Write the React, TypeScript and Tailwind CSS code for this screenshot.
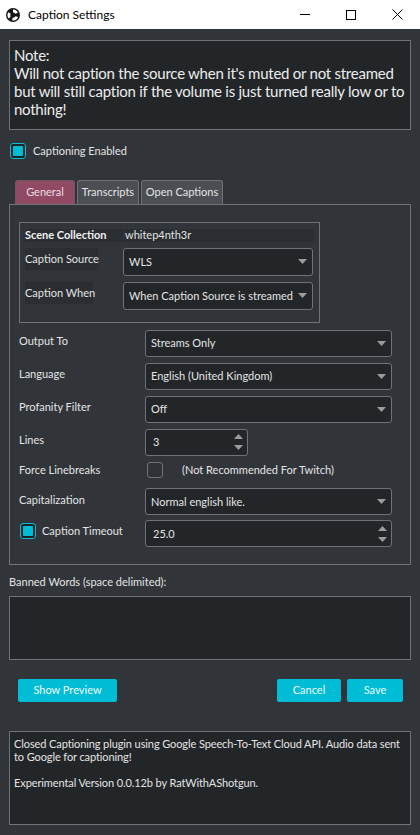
import React from 'react';

const font = { fontFamily: 'Lato, "Noto Sans", sans-serif' };

const Arrow = () => (
  <svg width="9" height="5" viewBox="0 0 9 5" className="shrink-0">
    <path d="M0 0 L9 0 L4.5 5 Z" fill="#9a9ca0" />
  </svg>
);

const Combo: React.FC<{ value: string; className?: string }> = ({ value, className = '' }) => (
  <div className={`flex items-center justify-between bg-[#232629] border border-[#6f7276] rounded-[3px] pl-[5px] pr-[5px] text-[11px] text-[#e4e4e4] whitespace-nowrap ${className}`}>
    <span className="pt-[1px]">{value}</span>
    <Arrow />
  </div>
);

const Spin: React.FC<{ value: string; className?: string }> = ({ value, className = '' }) => (
  <div className={`flex items-center justify-between bg-[#232629] border border-[#6f7276] rounded-[3px] pl-[7px] pr-[4px] text-[11px] text-[#e4e4e4] ${className}`}>
    <span className="pt-[1px]">{value}</span>
    <div className="flex flex-col gap-[6px]">
      <svg width="9" height="5" viewBox="0 0 9 5"><path d="M0 5 L9 5 L4.5 0 Z" fill="#9a9ca0" /></svg>
      <svg width="9" height="5" viewBox="0 0 9 5"><path d="M0 0 L9 0 L4.5 5 Z" fill="#9a9ca0" /></svg>
    </div>
  </div>
);

const Check: React.FC<{ on?: boolean }> = ({ on }) =>
  on ? (
    <div className="w-[16px] h-[16px] rounded-[3px] border border-[#00bcd4] bg-[#1f2326] flex items-center justify-center shrink-0">
      <div className="w-[10px] h-[10px] rounded-[1px] bg-[#00bcd4]" />
    </div>
  ) : (
    <div className="w-[16px] h-[16px] rounded-[3px] border border-[#6f7276] bg-[#2f3337] shrink-0" />
  );

const Row: React.FC<{ label: React.ReactNode; children: React.ReactNode; className?: string }> = ({ label, children, className = '' }) => (
  <div className={`flex items-center ${className}`}>
    <div className="w-[126px] shrink-0 text-[11px] text-[#e4e4e4] whitespace-nowrap -mt-[3px]">{label}</div>
    {children}
  </div>
);

export default function App() {
  return (
    <div className="w-[420px] h-[835px] bg-[#31353a] flex flex-col overflow-hidden" style={font}>
      {/* title bar */}
      <div className="h-[29px] bg-white flex items-center shrink-0">
        <svg width="14" height="14" viewBox="0 0 16 16" className="ml-[6px]">
          <circle cx="8" cy="8" r="8" fill="#151515" />
          <path d="M8 1.8 A6.2 6.2 0 0 1 13.6 5.5 L10.6 6.6 A3 3 0 0 0 8 5 Z" fill="#fff" />
          <path d="M13.8 10.2 A6.2 6.2 0 0 1 7 14.1 L7.6 11 A3 3 0 0 0 10.8 9.4 Z" fill="#fff" />
          <path d="M3.2 12 A6.2 6.2 0 0 1 2.6 4.8 L5.4 6.5 A3 3 0 0 0 5.3 9.8 Z" fill="#fff" />
        </svg>
        <span className="ml-[8px] text-[12px] text-black">Caption Settings</span>
        <div className="ml-auto flex items-center h-full">
          <div className="w-[46px] h-full flex items-center justify-center">
            <div className="w-[10px] h-px bg-black" />
          </div>
          <div className="w-[46px] h-full flex items-center justify-center">
            <div className="w-[10px] h-[10px] border border-black" />
          </div>
          <div className="w-[46px] h-full flex items-center justify-center">
            <svg width="11" height="11" viewBox="0 0 11 11"><path d="M0.5 0.5 L10.5 10.5 M10.5 0.5 L0.5 10.5" stroke="#000" strokeWidth="1" /></svg>
          </div>
        </div>
      </div>

      <div className="flex flex-col px-[9px] pt-[11px] pb-[10px] flex-1">
        {/* note */}
        <div className="h-[90px] bg-[#232629] border border-[#6f7276] px-[4px] pt-[5px] text-[15px] tracking-[-0.25px] leading-[18px] text-[#ececec]">
          Note:<br />
          Will not caption the source when it's muted or not streamed but will still caption if the volume is just turned really low or to nothing!
        </div>

        <div className="flex items-center gap-[7px] mt-[13px] ml-[1px] text-[11px] text-[#e4e4e4]">
          <Check on />
          <span>Captioning Enabled</span>
        </div>

        {/* tabs */}
        <div className="flex items-end mt-[20px] ml-[6px] gap-[2px] text-[11px]">
          <div className="w-[60px] h-[24px] bg-[#914a64] border border-[#6f5560] border-b-0 rounded-t-[3px] flex items-center justify-center text-[#e8dce2]">General</div>
          <div className="w-[62px] h-[24px] bg-[#4b4f54] border border-[#6f7276] border-b-0 rounded-t-[3px] flex items-center justify-center text-[#e4e4e4]">Transcripts</div>
          <div className="w-[82px] h-[24px] bg-[#4b4f54] border border-[#6f7276] border-b-0 rounded-t-[3px] flex items-center justify-center text-[#e4e4e4]">Open Captions</div>
        </div>

        <div className="h-[361px] border border-[#6f7276] flex flex-col px-[9px] pt-[17px]">
          {/* scene group */}
          <div className="w-[301px] h-[101px] border border-[#6f7276] flex flex-col px-[5px] pt-[6px]">
            <div className="flex items-center h-[13px]">
              <div className="w-[98px] h-[13px] bg-[#2a2d31] flex items-center text-[11px] font-bold text-[#f0f0f0] whitespace-nowrap">Scene Collection</div>
              <div className="ml-[1px] w-[190px] h-[13px] bg-[#2a2d31] flex items-center pl-[1px] text-[11px] text-[#e4e4e4]">whitep4nth3r</div>
            </div>
            <div className="flex items-center mt-[6px]">
              <div className="w-[73px] h-[22px] bg-[#2a2d31] flex items-center text-[11px] text-[#e4e4e4] whitespace-nowrap -mt-[5px]">Caption Source</div>
              <Combo value="WLS" className="ml-[25px] w-[190px] h-[28px]" />
            </div>
            <div className="flex items-center mt-[6px]">
              <div className="w-[68px] h-[22px] bg-[#2a2d31] flex items-center text-[11px] text-[#e4e4e4] whitespace-nowrap -mt-[5px]">Caption When</div>
              <Combo value="When Caption Source is streamed" className="ml-[30px] w-[190px] h-[28px]" />
            </div>
          </div>

          <Row label="Output To" className="mt-[7px]">
            <Combo value="Streams Only" className="w-[247px] h-[27px]" />
          </Row>
          <Row label="Language" className="mt-[6px]">
            <Combo value="English (United Kingdom)" className="w-[247px] h-[27px]" />
          </Row>
          <Row label="Profanity Filter" className="mt-[6px]">
            <Combo value="Off" className="w-[247px] h-[27px]" />
          </Row>
          <Row label="Lines" className="mt-[6px]">
            <Spin value="3" className="w-[103px] h-[27px]" />
          </Row>
          <Row label="Force Linebreaks" className="mt-[9px]">
            <div className="flex items-center text-[11px] text-[#e4e4e4] mt-[-3px]">
              <div className="ml-[2px]"><Check /></div>
              <span className="ml-[19px]">(Not Recommended For Twitch)</span>
            </div>
          </Row>
          <Row label="Capitalization" className="mt-[10px]">
            <Combo value="Normal english like." className="w-[247px] h-[27px]" />
          </Row>
          <Row
            label={
              <div className="flex items-center gap-[6px] ml-[1px] -mt-[2px]">
                <Check on />
                <span>Caption Timeout</span>
              </div>
            }
            className="mt-[5px]"
          >
            <Spin value="25.0" className="w-[247px] h-[27px]" />
          </Row>
        </div>

        <div className="mt-[9px] text-[11px] text-[#e4e4e4]">Banned Words (space delimited):</div>
        <div className="mt-[6px] h-[64px] bg-[#232629] border border-[#6f7276]" />

        <div className="flex items-center mt-[19px] px-[9px] text-[11px] text-[#eefbfd]">
          <div className="w-[99px] h-[23px] bg-[#00bcd4] rounded-[2px] flex items-center justify-center">Show Preview</div>
          <div className="ml-auto w-[64px] h-[23px] bg-[#00bcd4] rounded-[2px] flex items-center justify-center">Cancel</div>
          <div className="ml-[6px] mr-[-1px] w-[56px] h-[23px] bg-[#00bcd4] rounded-[2px] flex items-center justify-center">Save</div>
        </div>

        <div className="mt-[29px] flex-1 bg-[#232629] border border-[#6f7276] px-[4px] pt-[5px] text-[11px] tracking-[-0.1px] leading-[13px] text-[#e4e4e4]">
          Closed Captioning plugin using Google Speech-To-Text Cloud API. Audio data sent to Google for captioning!
          <br />
          <br />
          Experimental Version 0.0.12b by RatWithAShotgun.
        </div>
      </div>
    </div>
  );
}
